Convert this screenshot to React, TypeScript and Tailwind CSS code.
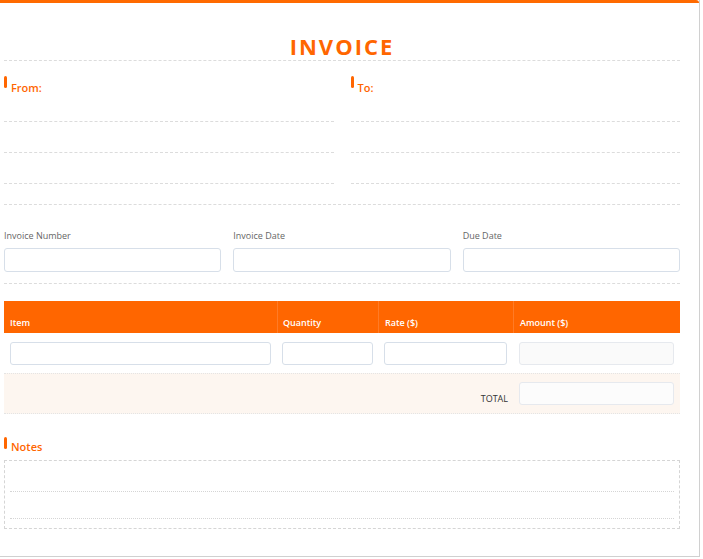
export default function App() {
  const f = { fontFamily: '"Open Sans", "Noto Sans", sans-serif' };
  const line = <div className="h-[31px] border-b border-dashed border-[#dcdcdc]" />;
  return (
    <div style={f} className="w-[703px] h-[559px] bg-white">
      <div className="w-[700px] h-[557px] border-r border-b border-[#d0d0d0] relative">
        <div className="h-[3px] bg-[#ff6a00] rounded-tr-[3px]" />
        <div className="pl-[4px] pr-[19px]">
          <div className="h-[58px] border-b border-dashed border-[#dcdcdc] flex items-end justify-center">
            <div className="text-[22px] font-bold tracking-[2px] text-[#ff6600] leading-none pb-[3px]">INVOICE</div>
          </div>
          <div className="flex gap-[17px] h-[144px] border-b border-dashed border-[#dcdcdc]">
            {["From:", "To:"].map((t) => (
              <div key={t} className="flex-1">
                <div className="h-[32px] pt-[15px] flex items-start">
                  <div className="w-[3px] h-[12px] bg-[#ff6600] rounded-full mr-[4px]" />
                  <div className="text-[11px] font-semibold text-[#ff6600] mt-[4px]">{t}</div>
                </div>
                <div className="h-[29px] border-b border-dashed border-[#dcdcdc]" />
                {line}
                {line}
              </div>
            ))}
          </div>
          <div className="flex gap-[12px] h-[79px] border-b border-dashed border-[#dcdcdc] pt-[24px]">
            {["Invoice Number", "Invoice Date", "Due Date"].map((t) => (
              <div key={t} className="flex-1">
                <div className="text-[9px] text-[#666] h-[19px]">{t}</div>
                <div className="h-[24px] border border-[#d7dfe9] rounded-[3px]" />
              </div>
            ))}
          </div>
          <div className="mt-[17px] h-[32px] bg-[#ff6600] flex text-[9px] font-semibold text-white">
            <div className="w-[273px] pl-[6px] pt-[15px]">Item</div>
            <div className="w-[101px] pl-[5px] pt-[15px] border-l border-[#ff7b26]">Quantity</div>
            <div className="w-[135px] pl-[6px] pt-[15px] border-l border-[#ff7b26]">Rate ($)</div>
            <div className="flex-1 pl-[6px] pt-[15px] border-l border-[#ff7b26]">Amount ($)</div>
          </div>
          <div className="flex h-[40px] items-center">
            <div className="w-[273px] px-[6px]"><div className="h-[23px] border border-[#d7dfe9] rounded-[3px]" /></div>
            <div className="w-[101px] px-[5px]"><div className="h-[23px] border border-[#d7dfe9] rounded-[3px]" /></div>
            <div className="w-[135px] px-[6px]"><div className="h-[23px] border border-[#d7dfe9] rounded-[3px]" /></div>
            <div className="flex-1 px-[6px]"><div className="h-[23px] border border-[#e6e9ee] bg-[#fafafa] rounded-[3px]" /></div>
          </div>
          <div className="flex h-[41px] bg-[#fdf6f0] border-y border-dotted border-[#e4e4e4]">
            <div className="w-[509px] flex justify-end items-end pb-[8px] pr-[5px] text-[9px] text-[#333]">TOTAL</div>
            <div className="flex-1 px-[6px] pt-[8px]"><div className="h-[23px] border border-[#e6e9ee] bg-[#fcfcfc] rounded-[3px]" /></div>
          </div>
          <div className="h-[46px] flex items-end pb-[5px]">
            <div className="w-[3px] h-[12px] bg-[#ff6600] rounded-full mr-[4px] mb-[6px]" />
            <div className="text-[11px] font-semibold text-[#ff6600]">Notes</div>
          </div>
          <div className="h-[69px] border border-dashed border-[#d5d5d5] px-[5px]">
            <div className="h-[31px] border-b border-dotted border-[#d5d5d5]" />
            <div className="h-[27px] border-b border-dotted border-[#d5d5d5]" />
          </div>
        </div>
      </div>
    </div>
  );
}
